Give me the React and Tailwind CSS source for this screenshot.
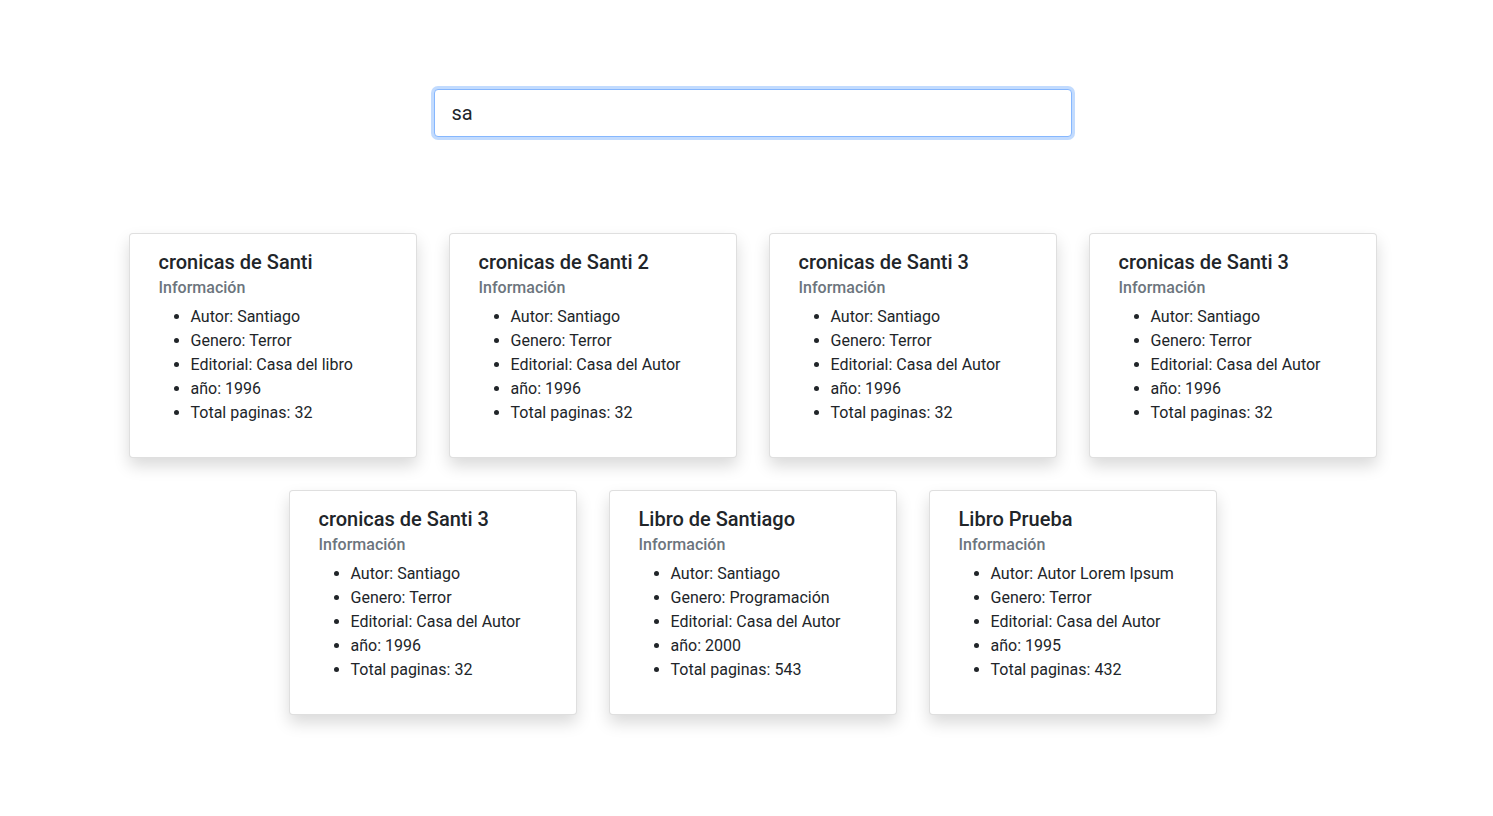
// Book search results

const books = [
  { id: 1, titulo: 'cronicas de Santi', autor: 'Santiago', genero: 'Terror', editorial: 'Casa del libro', anio: 1996, paginas: 32 },
  { id: 2, titulo: 'cronicas de Santi 2', autor: 'Santiago', genero: 'Terror', editorial: 'Casa del Autor', anio: 1996, paginas: 32 },
  { id: 3, titulo: 'cronicas de Santi 3', autor: 'Santiago', genero: 'Terror', editorial: 'Casa del Autor', anio: 1996, paginas: 32 },
  { id: 4, titulo: 'cronicas de Santi 3', autor: 'Santiago', genero: 'Terror', editorial: 'Casa del Autor', anio: 1996, paginas: 32 },
  { id: 5, titulo: 'cronicas de Santi 3', autor: 'Santiago', genero: 'Terror', editorial: 'Casa del Autor', anio: 1996, paginas: 32 },
  { id: 6, titulo: 'Libro de Santiago', autor: 'Santiago', genero: 'Programación', editorial: 'Casa del Autor', anio: 2000, paginas: 543 },
  { id: 7, titulo: 'Libro Prueba', autor: 'Autor Lorem Ipsum', genero: 'Terror', editorial: 'Casa del Autor', anio: 1995, paginas: 432 },
];

const BookCard = ({ book }) => (
  <div className="w-[288px] bg-white border border-black/[0.125] rounded shadow-[0_8px_16px_rgba(0,0,0,0.15)]">
    <div className="pt-4 pb-4 pl-[29px] pr-7">
      <h5 className="text-[20px] leading-[1.2] font-medium text-[#212529] mb-2">{book.titulo}</h5>
      <h6 className="text-[16px] leading-[1.2] font-medium text-[#6c757d] -mt-1 mb-2">Información</h6>
      <ul className="list-disc pl-8 mb-4 text-[16px] leading-6 text-[#212529]">
        <li>Autor: {book.autor}</li>
        <li>Genero: {book.genero}</li>
        <li>Editorial: {book.editorial}</li>
        <li>año: {book.anio}</li>
        <li>Total paginas: {book.paginas}</li>
      </ul>
    </div>
  </div>
);

export default function App() {
  return (
    <div className="min-h-screen bg-white pl-3 pt-[89px] font-['Roboto','Liberation_Sans',sans-serif]">
      {/* Search */}
      <div className="flex justify-center">
        <input
          type="text"
          defaultValue="sa"
          className="w-[638px] h-12 pl-[17px] pr-4 text-[20px] text-[#212529] bg-white border border-[#86b7fe] rounded outline-none shadow-[0_0_0_3px_rgba(13,110,253,0.25)]"
        />
      </div>

      {/* Results */}
      <div className="flex flex-wrap justify-center gap-8 max-w-[1280px] mx-auto mt-24">
        {books.map((book) => (
          <BookCard key={book.id} book={book} />
        ))}
      </div>
    </div>
  );
}
